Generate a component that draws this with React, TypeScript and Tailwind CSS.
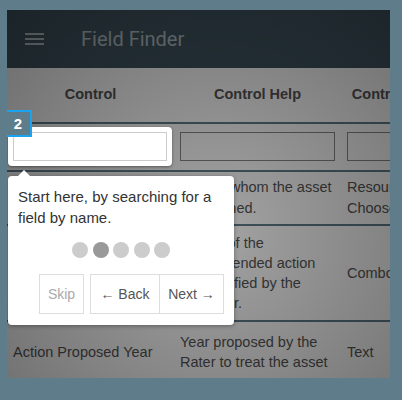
import React from 'react';

const FONT = "font-['Liberation_Sans',Arial,sans-serif]";

function Cell({ children, className = '' }: { children: React.ReactNode; className?: string }) {
  return <div className={`flex items-center px-[6px] ${className}`}>{children}</div>;
}

export default function App() {
  return (
    <div className={`w-[402px] h-[400px] bg-[#5f7c8a] pt-[10px] pl-[7px] ${FONT}`}>
      <div className="relative w-[383px] h-[368px] overflow-hidden bg-white">
        {/* App bar */}
        <div className="h-[58px] bg-[#405560] flex items-center pl-[18px]">
          <div className="flex flex-col gap-[3px] w-[19px]">
            <span className="h-[2px] bg-[#b4c0c6]" />
            <span className="h-[2px] bg-[#b4c0c6]" />
            <span className="h-[2px] bg-[#b4c0c6]" />
          </div>
          <span className="ml-[37px] font-['Roboto',sans-serif] text-[20px] text-[#b4c0c6]">Field Finder</span>
        </div>

        {/* Table */}
        <div className="w-[444px] text-[14.5px] text-[#555]">
          <div className="grid grid-cols-[167px_167px_110px] h-[56px] border-b-2 border-[#607d8b] font-bold">
            <div className="flex items-center justify-center">Control</div>
            <div className="flex items-center justify-center">Control Help</div>
            <div className="flex items-center justify-center">Control Type</div>
          </div>
          <div className="grid grid-cols-[167px_167px_110px] h-[48px] border-b-2 border-[#607d8b] pt-[8px]">
            <div className="px-[6px]"><div className="h-[29px] border border-[#888] bg-white" /></div>
            <div className="px-[6px]"><div className="h-[29px] border border-[#888] bg-white" /></div>
            <div className="px-[6px]"><div className="h-[29px] border border-[#888] bg-white" /></div>
          </div>
          <div className="grid grid-cols-[167px_167px_110px] h-[54px] border-b-2 border-[#607d8b] leading-[21px]">
            <Cell>Assessed By</Cell>
            <Cell className="whitespace-nowrap">Person whom the asset<br />is assigned.</Cell>
            <Cell>Resource<br />Chooser</Cell>
          </div>
          <div className="grid grid-cols-[167px_167px_110px] h-[96px] border-b-2 border-[#607d8b] leading-[20px]">
            <Cell>Recommended Action</Cell>
            <Cell>Nature of the<br />recommended action<br />as identified by the<br />inspector.</Cell>
            <Cell>ComboBox</Cell>
          </div>
          <div className="grid grid-cols-[167px_167px_110px] h-[60px] leading-[20px]">
            <Cell>Action Proposed Year</Cell>
            <Cell>Year proposed by the<br />Rater to treat the asset</Cell>
            <Cell>Text</Cell>
          </div>
        </div>

        {/* Dim overlay */}
        <div className="absolute inset-0 bg-[radial-gradient(ellipse_at_55%_60%,rgba(0,0,0,0.36)_0%,rgba(0,0,0,0.5)_65%,rgba(0,0,0,0.58)_100%)]" />

        {/* Highlighted element */}
        <div className="absolute left-[1px] top-[117px] w-[164px] h-[39px] bg-white rounded-[4px] shadow-[0_1px_3px_rgba(0,0,0,0.4)] p-[5px]">
          <div className="h-[29px] border border-[#ccc] bg-white" />
        </div>

        {/* Step badge */}
        <div className="absolute left-[-7px] top-[100px] w-[32px] h-[27px] border-2 border-[#1aa3f0] bg-[#5f7c8a] flex items-center justify-end pr-[8px] pt-[2px] text-white font-bold text-[15px]">
          2
        </div>

        {/* Popover */}
        <div className="absolute left-[1px] top-[166px] w-[226px] h-[149px] bg-white rounded-[4px] shadow-[0_1px_4px_rgba(0,0,0,0.35)] pt-[10px] px-[10px]">
          <div className="absolute -top-[6px] left-[10px] w-0 h-0 border-x-[6px] border-x-transparent border-b-[6px] border-b-white" />
          <p className="text-[15px] leading-[21px] text-[#333]">
            Start here, by searching for a field by name.
          </p>
          <div className="mt-[14px] flex justify-center gap-[4.5px]">
            <span className="w-4 h-4 rounded-full bg-[#ccc]" />
            <span className="w-4 h-4 rounded-full bg-[#999]" />
            <span className="w-4 h-4 rounded-full bg-[#ccc]" />
            <span className="w-4 h-4 rounded-full bg-[#ccc]" />
            <span className="w-4 h-4 rounded-full bg-[#ccc]" />
          </div>
          <div className="mt-[16px] flex justify-end text-[14px]">
            <button className="w-[45px] h-[40px] border border-[#ddd] text-[#aaa]">Skip</button>
            <button className="ml-[6px] w-[70px] h-[40px] border border-[#ddd] text-[#555]">← Back</button>
            <button className="w-[64px] h-[40px] border border-l-0 border-[#ddd] text-[#555]">Next →</button>
          </div>
        </div>
      </div>
    </div>
  );
}
